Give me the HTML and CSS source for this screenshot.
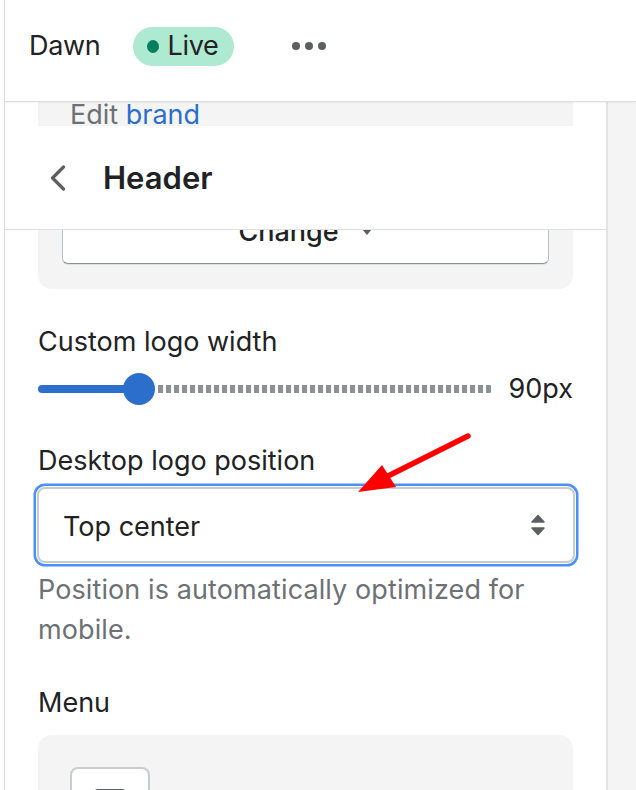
FILE: index.html
```html
<!DOCTYPE html>
<html lang="en">
<head>
<meta charset="utf-8">
<title>Theme editor – Header</title>
<link rel="stylesheet" href="styles.css">
</head>
<body>
<div class="screen">
  <header class="topbar">
    <span class="theme-name">Dawn</span>
    <span class="badge"><span class="badge-dot"></span>Live</span>
    <span class="more" aria-label="More actions"><i></i><i></i><i></i></span>
  </header>

  <div class="main">
    <div class="panel">
      <div class="pad">
        <div class="peek peek-brand">
          <div class="brand-card"><span class="muted">Edit</span> <a class="link">brand</a></div>
        </div>
      </div>

      <div class="section-head">
        <svg class="back" width="16" height="26" viewBox="0 0 16 26"><polyline points="13.5,2 2.5,13 13.5,24" fill="none" stroke="#5c5f62" stroke-width="3.2" stroke-linecap="round" stroke-linejoin="round"/></svg>
        <h1 class="section-title">Header</h1>
      </div>

      <div class="pad">
        <div class="peek peek-logo">
          <div class="logo-card">
            <div class="change-btn">Change <svg class="caret" width="12" height="8" viewBox="0 0 12 8"><path d="M1 1h10L6 7z" fill="#5c5f62"/></svg></div>
          </div>
        </div>

        <div class="field field-width">
          <div class="label">Custom logo width</div>
          <div class="range-row">
            <div class="range">
              <div class="range-fill" style="width:101px"></div>
              <div class="range-thumb"></div>
              <div class="range-rest"></div>
            </div>
            <span class="range-value">90px</span>
          </div>
        </div>

        <div class="field field-position">
          <div class="label">Desktop logo position</div>
          <div class="select">
            <span>Top center</span>
            <svg class="updown" width="16" height="22" viewBox="0 0 16 22"><path d="M8 1.5l6 6.5H2z M8 20.5l6-6.5H2z" fill="#5c5f62" stroke="#5c5f62" stroke-width="1.5" stroke-linejoin="round"/></svg>
          </div>
          <p class="help">Position is automatically optimized for mobile.</p>
        </div>

        <div class="field field-menu">
          <div class="label">Menu</div>
          <div class="menu-card">
            <div class="menu-btn"><span class="menu-icon"></span></div>
          </div>
        </div>
      </div>
    </div>
    <div class="gutter"></div>
  </div>

  <svg class="annotation" width="636" height="790" viewBox="0 0 636 790" aria-hidden="true">
    <line x1="468" y1="436" x2="380" y2="480" stroke="#ff0000" stroke-width="5.5" stroke-linecap="round"/>
    <polygon points="358,492 382,465 396,487" fill="#ff0000"/>
  </svg>
</div>
</body>
</html>
```

FILE: styles.css
```css
* { box-sizing: border-box; }

html, body {
  margin: 0;
  padding: 0;
  background: #ffffff;
}

body {
  font-family: Inter, "Noto Sans", sans-serif;
  font-size: 27px;
  color: #202223;
}

.screen {
  position: relative;
  height: 790px;
  overflow: hidden;
  margin-left: 4px;
  border-left: 1px solid #d6d8db;
  display: flex;
  flex-direction: column;
}

/* top bar */
.topbar {
  flex: none;
  height: 102px;
  display: flex;
  align-items: center;
  padding: 0 0 9px 24px;
  background: #fff;
  border-bottom: 1px solid #dcdee0;
  box-shadow: 0 1px 2px rgba(0,0,0,0.06);
  position: relative;
  z-index: 2;
}

.theme-name {
  font-size: 27px;
  line-height: 32px;
  letter-spacing: -0.3px;
}

.badge {
  margin-left: 32px;
  height: 39px;
  display: inline-flex;
  align-items: center;
  padding: 0 15px 0 14px;
  border-radius: 20px;
  background: #aee9d1;
  font-size: 27px;
  line-height: 32px;
  color: #202223;
  letter-spacing: -0.3px;
}

.badge-dot {
  width: 12px;
  height: 13px;
  border-radius: 50%;
  background: #007f5f;
  margin-right: 9px;
}

.more {
  margin-left: 58px;
  display: inline-flex;
  gap: 5px;
}
.more i {
  width: 8px;
  height: 8px;
  border-radius: 50%;
  background: #5c5f62;
}

/* main area */
.main {
  flex: 1;
  display: flex;
  min-height: 0;
}

.panel {
  width: 603px;
  flex: none;
  border-right: 2px solid #e1e3e5;
  background: #fff;
}

.gutter {
  flex: 1;
  background: #f4f4f4;
}

.pad {
  padding: 0 33px;
}

.peek {
  overflow: hidden;
  display: flex;
  flex-direction: column;
  justify-content: flex-end;
}

.peek-brand {
  height: 24px;
}

.brand-card {
  background: #f4f4f4;
  padding: 0 32px;
  font-size: 27px;
  line-height: 26px;
  height: 24px;
  overflow: hidden;
}

.muted { color: #6d7175; }
.link { color: #2c6ecb; text-decoration: none; }

.section-head {
  height: 104px;
  display: flex;
  align-items: center;
  padding-left: 45px;
  border-bottom: 1px solid #dcdfe3;
}

.back {
  flex: none;
  display: block;
}

.section-title {
  margin: 0 0 0 37px;
  font-size: 31px;
  font-weight: 600;
  line-height: 36px;
  color: #202223;
}

.peek-logo {
  height: 59px;
}

.logo-card {
  flex: none;
  background: #f4f4f4;
  border-radius: 0 0 14px 14px;
  padding: 20px 24px 25px;
}

.change-btn {
  height: 68px;
  background: #fff;
  border: 1px solid #babfc3;
  border-bottom-color: #8c9196;
  border-radius: 6px;
  box-shadow: 0 1px 0 rgba(0,0,0,0.08);
  display: flex;
  align-items: center;
  justify-content: center;
  gap: 22px;
  font-size: 27px;
  line-height: 32px;
  font-weight: 500;
  padding-top: 4px;
}

.caret { display: block; }

/* fields */
.label {
  font-size: 27px;
  line-height: 34px;
  color: #202223;
}

.field-width {
  margin-top: 36px;
}

.range-row {
  margin-top: 14px;
  height: 32px;
  display: flex;
  align-items: center;
}

.range {
  width: 455px;
  height: 32px;
  display: flex;
  align-items: center;
}

.range-fill {
  height: 8px;
  background: #2c6ecb;
  border-radius: 4px 0 0 4px;
}

.range-thumb {
  flex: none;
  width: 32px;
  height: 32px;
  border-radius: 50%;
  background: #2c6ecb;
  margin-left: -16px;
}

.range-rest {
  flex: 1;
  height: 8px;
  margin-left: 3px;
  border-radius: 0 4px 4px 0;
  background: repeating-linear-gradient(to right, #8c9196 0 5px, transparent 5px 8px);
}

.range-value {
  margin-left: auto;
  font-size: 27px;
  line-height: 32px;
}

.field-position {
  margin-top: 39px;
}

.select {
  margin-top: 9px;
  margin-left: -1px;
  margin-right: -2px;
  height: 76px;
  border: 2px solid #c9cccf;
  border-radius: 8px;
  box-shadow: 0 0 0 1px #fff, 0 0 0 3.5px #4a90f7;
  display: flex;
  align-items: center;
  justify-content: space-between;
  padding: 3px 27px 0 24px;
  font-size: 27px;
  line-height: 32px;
  background: #fff;
}

.updown { display: block; margin-top: -3px; }

.help {
  margin: 7px 0 0;
  font-size: 27px;
  line-height: 40px;
  color: #6d7175;
  letter-spacing: 0.1px;
}

.field-menu {
  margin-top: 36px;
}

.menu-card {
  margin-top: 15px;
  background: #f4f4f4;
  border-radius: 14px;
  padding: 32px;
  height: 200px;
}

.menu-btn {
  width: 80px;
  height: 80px;
  background: #fff;
  border: 2px solid #c9cccf;
  border-radius: 8px;
  padding: 20px 0 0 21px;
}

.menu-icon {
  display: block;
  width: 34px;
  height: 26px;
  border-radius: 5px;
  background: #5c5f62;
}

.annotation {
  position: absolute;
  left: -5px;
  top: 0;
  pointer-events: none;
  z-index: 5;
}
```
